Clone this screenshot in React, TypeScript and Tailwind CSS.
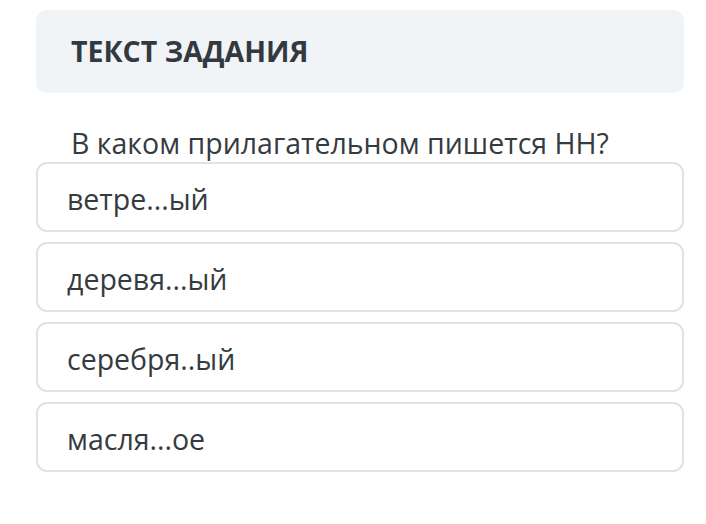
import React from 'react';

const options = ['ветре...ый', 'деревя...ый', 'серебря..ый', 'масля...ое'];

export default function App() {
    return (
        <div className="w-[706px] h-[524px] bg-white pl-[36px] pr-[22px] pt-[10px] text-[#353b40]" style={{ fontFamily: '"Open Sans", "Noto Sans", sans-serif' }}>
            {/* заголовок */}
            <div className="h-[83px] rounded-[10px] bg-[#f1f4f6] pl-[35px] flex items-center">
                <h2 className="text-[28.5px] font-bold text-[#33393e]">ТЕКСТ ЗАДАНИЯ</h2>
            </div>

            <p className="mt-[31px] pl-[35px] text-[28.5px] leading-[38px]">В каком прилагательном пишется НН?</p>

            <div className="flex flex-col gap-[10px]">
                {options.map((o) => (
                    <div key={o} className="h-[70px] rounded-[11px] border-2 border-[#dfe3e5] pl-[29px] flex items-center text-[28.5px] pt-[4px]">
                        {o}
                    </div>
                ))}
            </div>
        </div>
    );
}
